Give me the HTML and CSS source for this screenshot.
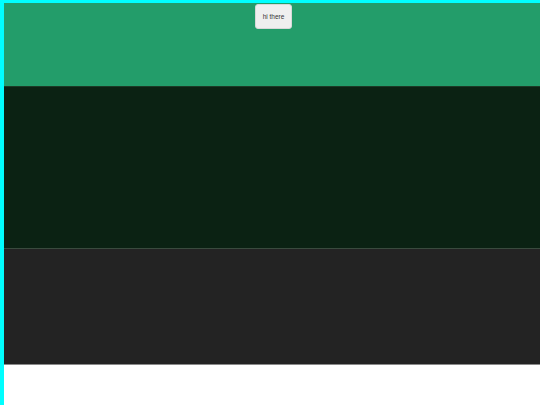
FILE: index.html
```html
<!DOCTYPE html>
<html>
<head>
<meta charset="utf-8">
<link rel="stylesheet" href="styles.css">
</head>
<body>
<div class="frame">
  <section class="hero">
    <button class="btn">hi there</button>
  </section>
  <section class="dark"></section>
  <section class="grey"></section>
</div>
</body>
</html>
```
FILE: styles.css
```css
html, body {
  margin: 0;
  padding: 0;
  background: #ffffff;
  font-family: "Liberation Sans", Arial, sans-serif;
}
.frame {
  border-top: 3px solid #00ffff;
  border-left: 4px solid #00ffff;
  min-height: 100vh;
  box-sizing: border-box;
}
.hero {
  height: 83px;
  background: #239d6a;
  display: flex;
  justify-content: center;
  align-items: flex-start;
  padding-top: 1px;
  box-sizing: border-box;
}
.btn {
  width: 37px;
  height: 25px;
  margin-left: 3px;
  background: #efefef;
  border: 1px solid #d8d8d8;
  border-radius: 3px;
  font-family: "Liberation Sans", Arial, sans-serif;
  font-size: 6.5px;
  color: #333;
  padding: 0;
}
.dark {
  height: 162px;
  background: #0b2213;
  border-top: 1px solid #1c3a26;
  box-sizing: border-box;
}
.grey {
  height: 117px;
  background: #232323;
  border-top: 1px solid #3a4a3e;
  border-bottom: 1px solid #8a8a8a;
  box-sizing: border-box;
}
```
